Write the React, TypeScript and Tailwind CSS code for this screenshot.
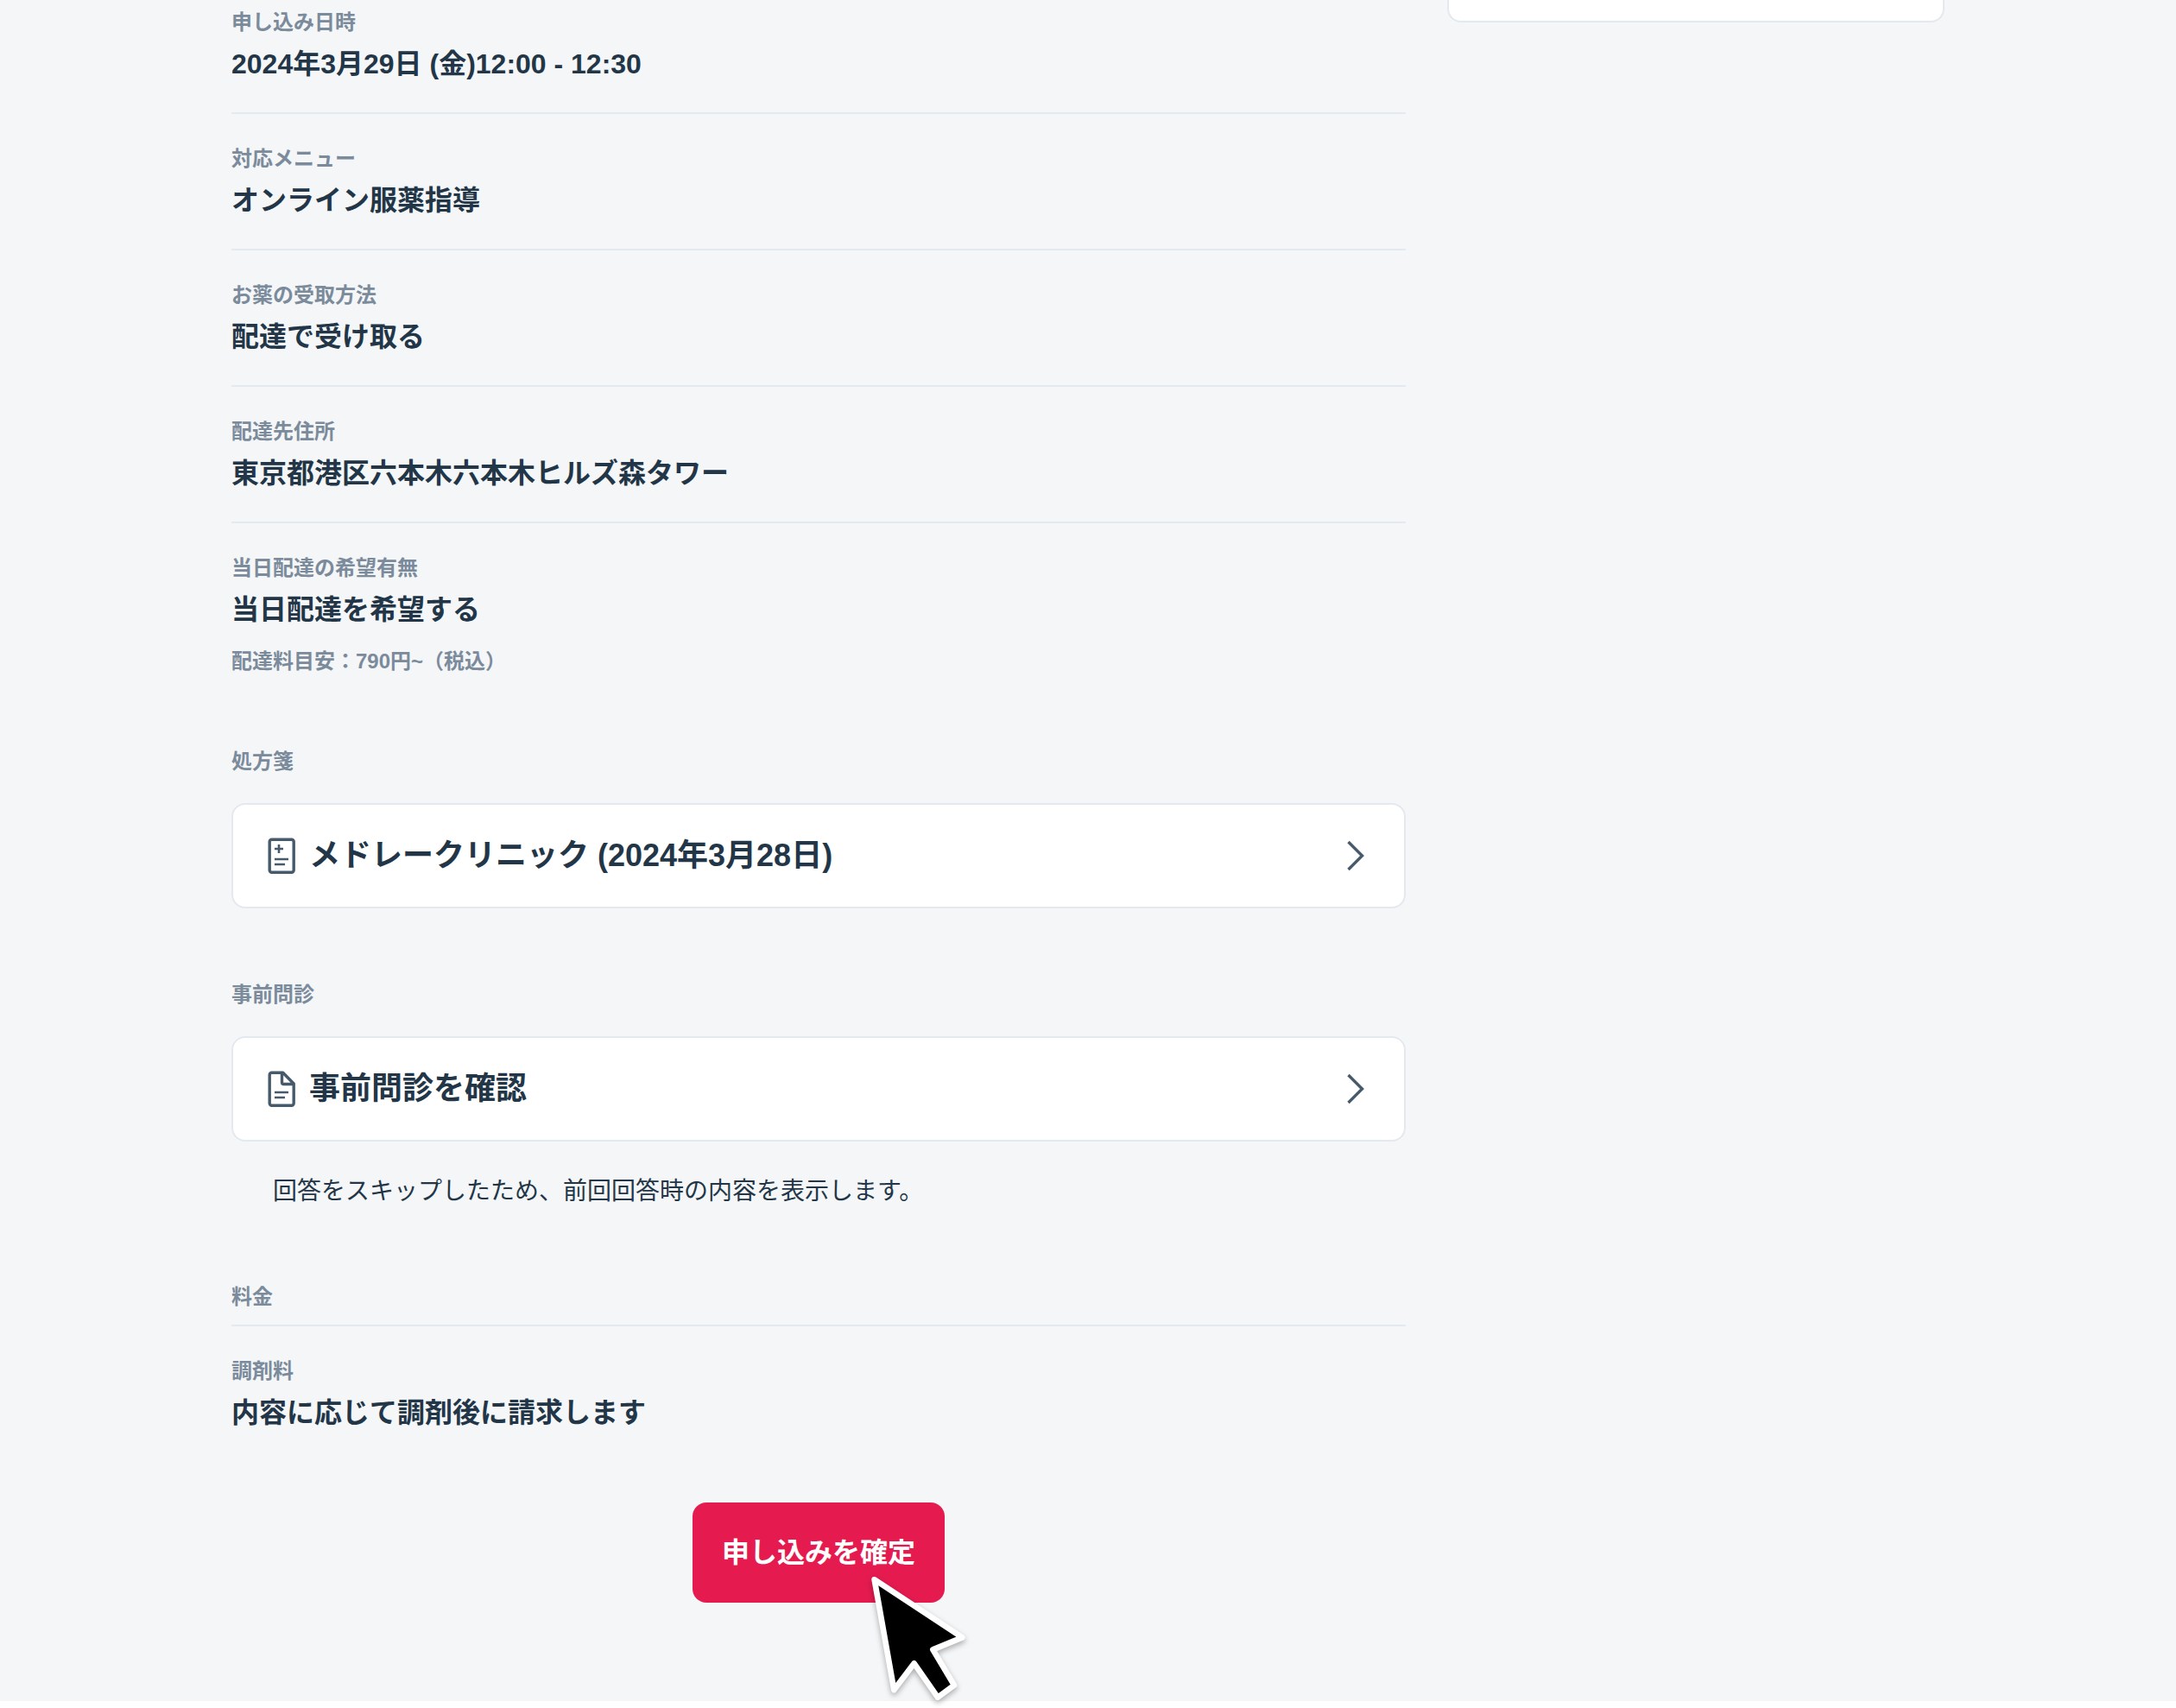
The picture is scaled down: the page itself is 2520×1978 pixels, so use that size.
import { ReactNode } from "react"

type FieldProps = {
  label: string
  children: ReactNode
  note?: string
}

const Field = ({ label, children, note }: FieldProps) => {
  return (
    <div>
      <dt className="text-[24px] leading-[40px] font-bold text-[#7b8b9b]">
        {label}
      </dt>
      <dd className="mt-1 text-[32px] leading-[48px] font-bold">{children}</dd>
      {note && (
        <dd className="mt-4 text-[24px] leading-[40px] font-bold text-[#7b8b9b]">
          {note}
        </dd>
      )}
    </div>
  )
}

const SectionTitle = ({ children }: { children: ReactNode }) => (
  <h2 className="text-[24px] leading-[40px] font-bold text-[#7b8b9b]">
    {children}
  </h2>
)

const PrescriptionIcon = () => (
  <svg
    className="size-12 shrink-0 text-[#465a6c]"
    viewBox="0 0 48 48"
    fill="none"
    stroke="currentColor"
    aria-hidden="true"
  >
    <rect x="10.2" y="5.2" width="28" height="38" rx="2.5" strokeWidth="3.4" />
    <path d="M16 16h10M21 11v10M16 28h16M16 34h12" strokeWidth="2.6" />
  </svg>
)

const DocumentIcon = () => (
  <svg
    className="size-12 shrink-0 text-[#465a6c]"
    viewBox="0 0 48 48"
    fill="none"
    stroke="currentColor"
    strokeLinejoin="round"
    aria-hidden="true"
  >
    <path
      d="M12.700 5.200h13l12.500 12.800v22.700a2.500 2.500 0 0 1-2.500 2.500h-23a2.500 2.500 0 0 1-2.500-2.500v-33a2.500 2.500 0 0 1 2.500-2.500zM24.500 5.500v11a2 2 0 0 0 2 2h11.500"
      strokeWidth="3.4"
    />
    <path d="M16 28h16M16 34h12" strokeWidth="2.6" />
  </svg>
)

const ChevronIcon = () => (
  <svg
    className="ml-auto size-12 shrink-0 text-[#465a6c]"
    viewBox="0 0 48 48"
    fill="none"
    stroke="currentColor"
    strokeWidth="3.4"
    aria-hidden="true"
  >
    <path d="M15.500 8l16 16-16 16" />
  </svg>
)

const Cursor = () => (
  <svg
    className="pointer-events-none absolute top-[78px] left-[202px] h-[144px] w-[120px] drop-shadow-[0_3px_3px_rgba(0,0,0,0.3)]"
    viewBox="672 294 360 432"
    overflow="visible"
    aria-hidden="true"
  >
    <path
      d="M698 328L1003 529L901 571L975 695L918 737L836 619L766 711Z"
      fill="#000"
      stroke="#fff"
      strokeWidth="20"
      strokeLinejoin="round"
    />
  </svg>
)

type LinkCardProps = {
  icon: ReactNode
  children: ReactNode
}

const LinkCard = ({ icon, children }: LinkCardProps) => (
  <a
    href="#"
    className="mt-7 flex items-center gap-2 rounded-2xl border-2 border-[#e4e8ef] bg-white px-8 py-8 text-[36px] leading-[54px] font-bold"
  >
    {icon}
    {children}
    <ChevronIcon />
  </a>
)

const fields = [
  { label: "申し込み日時", value: "2024年3月29日 (金)12:00 - 12:30" },
  { label: "対応メニュー", value: "オンライン服薬指導" },
  { label: "お薬の受取方法", value: "配達で受け取る" },
  { label: "配達先住所", value: "東京都港区六本木六本木ヒルズ森タワー" },
  {
    label: "当日配達の希望有無",
    value: "当日配達を希望する",
    note: "配達料目安：790円~（税込）",
  },
]

const App = () => {
  return (
    <div
      lang="ja"
      className="min-h-screen bg-white font-['Liberation_Sans','Noto_Sans_CJK_JP',sans-serif] text-[#233648]"
    >
      <div className="bg-[#f4f6f8]">
        <div className="mx-auto flex max-w-[1984px] items-start gap-12">
          <main className="min-w-0 flex-1 pt-[6px] pb-[114px]">
            <dl className="divide-y-2 divide-[#e4e8ef] *:py-8 *:first:pt-0 *:last:pb-0">
              {fields.map((field) => (
                <Field key={field.label} label={field.label} note={field.note}>
                  {field.value}
                </Field>
              ))}
            </dl>

            <section className="mt-19">
              <SectionTitle>処方箋</SectionTitle>
              <LinkCard icon={<PrescriptionIcon />}>
                メドレークリニック (2024年3月28日)
              </LinkCard>
            </section>

            <section className="mt-20">
              <SectionTitle>事前問診</SectionTitle>
              <LinkCard icon={<DocumentIcon />}>事前問診を確認</LinkCard>
              <p className="mt-9 px-12 text-[28px] leading-[44px]">
                回答をスキップしたため、前回回答時の内容を表示します。
              </p>
            </section>

            <section className="mt-20">
              <SectionTitle>料金</SectionTitle>
              <dl className="mt-3 border-t-2 border-[#e4e8ef] pt-8">
                <Field label="調剤料">内容に応じて調剤後に請求します</Field>
              </dl>
            </section>

            <div className="relative mx-auto mt-20 w-fit">
              <button
                type="button"
                className="rounded-2xl bg-[#e51b50] px-[34px] py-[34px] text-[32px] leading-[48px] font-bold text-white"
              >
                申し込みを確定
              </button>
              <Cursor />
            </div>
          </main>

          <aside className="h-[26px] w-[576px] shrink-0 rounded-b-2xl border-2 border-t-0 border-[#e4e8ef] bg-white" />
        </div>
      </div>
    </div>
  )
}

export default App
